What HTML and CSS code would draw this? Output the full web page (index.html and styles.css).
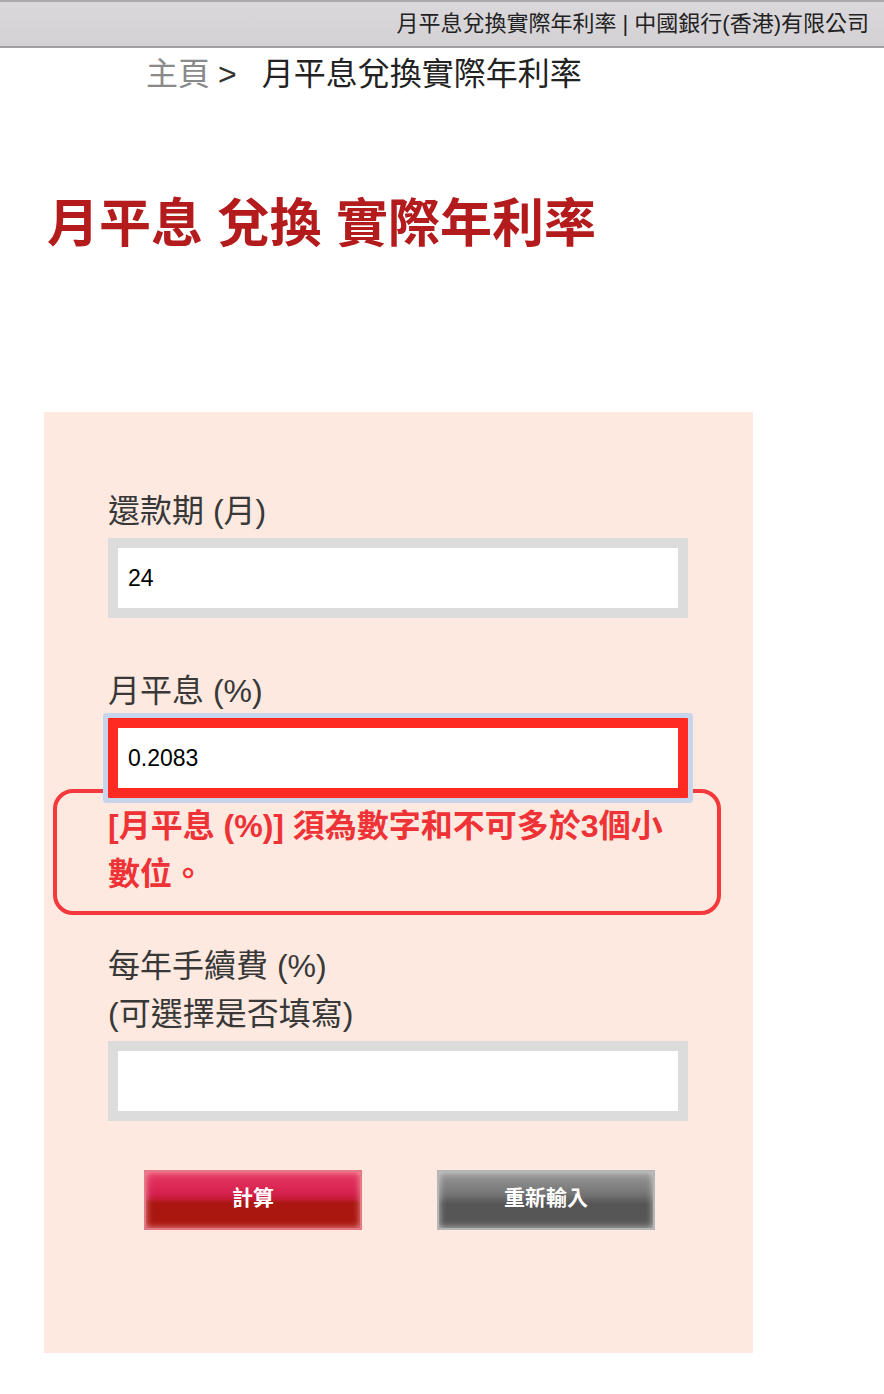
FILE: index.html
```html
<!DOCTYPE html>
<html lang="zh-Hant">
<head>
<meta charset="utf-8">
<title>月平息兌換實際年利率</title>
<link rel="stylesheet" href="styles.css">
</head>
<body>
<header class="topbar">月平息兌換實際年利率 | 中國銀行(香港)有限公司</header>
<nav class="crumbs"><span class="home">主頁</span><span class="sep">&gt;</span><span class="current">月平息兌換實際年利率</span></nav>
<h1 class="title">月平息 兌換 實際年利率</h1>
<main class="panel">
  <div class="field">
    <label class="label" for="f1">還款期 (月)</label>
    <input class="input" id="f1" type="text" value="24">
  </div>
  <div class="field">
    <label class="label" for="f2">月平息 (%)</label>
    <input class="input input-error" id="f2" type="text" value="0.2083">
    <div class="error">[月平息 (%)] 須為數字和不可多於3個小數位。</div>
  </div>
  <div class="field field-after-error">
    <label class="label" for="f3">每年手續費 (%)<br>(可選擇是否填寫)</label>
    <input class="input" id="f3" type="text" value="">
  </div>
  <div class="buttons">
    <button class="btn btn-red" type="button">計算</button>
    <button class="btn btn-grey" type="button">重新輸入</button>
  </div>
</main>
</body>
</html>
```
FILE: styles.css
```css
* { box-sizing: border-box; }
html, body { margin: 0; padding: 0; background: #ffffff; }
body {
  font-family: "Liberation Sans", "Noto Sans CJK TC", sans-serif;
  color: #333;
  width: 884px;
  min-height: 1394px;
}
.topbar {
  height: 48px;
  border-top: 2px solid #aba9ac;
  border-bottom: 2px solid #a19fa2;
  background: linear-gradient(#dad8db, #d4d1d4);
  font-size: 22px;
  line-height: 44px;
  color: #222;
  text-align: right;
  padding-right: 15px;
}
.crumbs {
  margin-top: 6px;
  padding-left: 146px;
  font-size: 32px;
  line-height: 40px;
  color: #222;
}
.crumbs .home { color: #8a8a8a; }
.crumbs .sep { margin: 0 25px 0 8px; color: #333; }
.title {
  margin: 100px 0 0;
  padding-left: 47px;
  font-size: 52px;
  line-height: 60px;
  font-weight: bold;
  color: #b41b1c;
}
.panel {
  margin: 158px 0 0 44px;
  width: 709px;
  background: #fde9e0;
  padding: 75px 0 123px 64px;
}
.field { margin-bottom: 49px; }
.field-after-error { margin-top: -22px; }
.label {
  display: block;
  font-size: 32px;
  line-height: 48px;
  color: #383838;
  margin-bottom: 3px;
}
.input {
  display: block;
  width: 580px;
  height: 80px;
  border: 10px solid #dcdcdc;
  background: #fff;
  padding: 0 10px;
  font-family: "Liberation Sans", sans-serif;
  font-size: 23px;
  color: #000;
  border-radius: 0;
  outline: none;
}
.input-error {
  position: relative;
  z-index: 1;
  border-color: #ff2a21;
  border-radius: 1px;
  box-shadow: 0 0 0 5px #c6d5eb;
}
.error {
  position: relative;
  margin: -9px 0 0 -55px;
  width: 668px;
  border: 4px solid #f4393d;
  border-radius: 20px;
  padding: 9px 29px 13px 51px;
  font-size: 32px;
  line-height: 48px;
  font-weight: bold;
  color: #ef3236;
}
.buttons {
  display: flex;
  gap: 75px;
  padding-left: 36px;
}
.btn {
  width: 218px;
  height: 60px;
  font-family: "Liberation Sans", "Noto Sans CJK TC", sans-serif;
  font-size: 21px;
  font-weight: bold;
  line-height: 52px;
  color: #fff;
  cursor: pointer;
  padding: 0 0 4px;
}
.btn-red {
  border: 2px solid #e57887;
  background: linear-gradient(#e63a63 0%, #d4204c 40%, #c01a30 50%, #aa1710 55%, #a9170f 100%);
  box-shadow: inset 0 0 7px rgba(255, 190, 200, 0.75);
}
.btn-grey {
  border: 2px solid #b5b5b5;
  background: linear-gradient(#9a9a9a 0%, #747474 40%, #5e5e5e 52%, #555 58%, #585858 100%);
  box-shadow: inset 0 0 7px rgba(235, 235, 235, 0.75);
}
```
